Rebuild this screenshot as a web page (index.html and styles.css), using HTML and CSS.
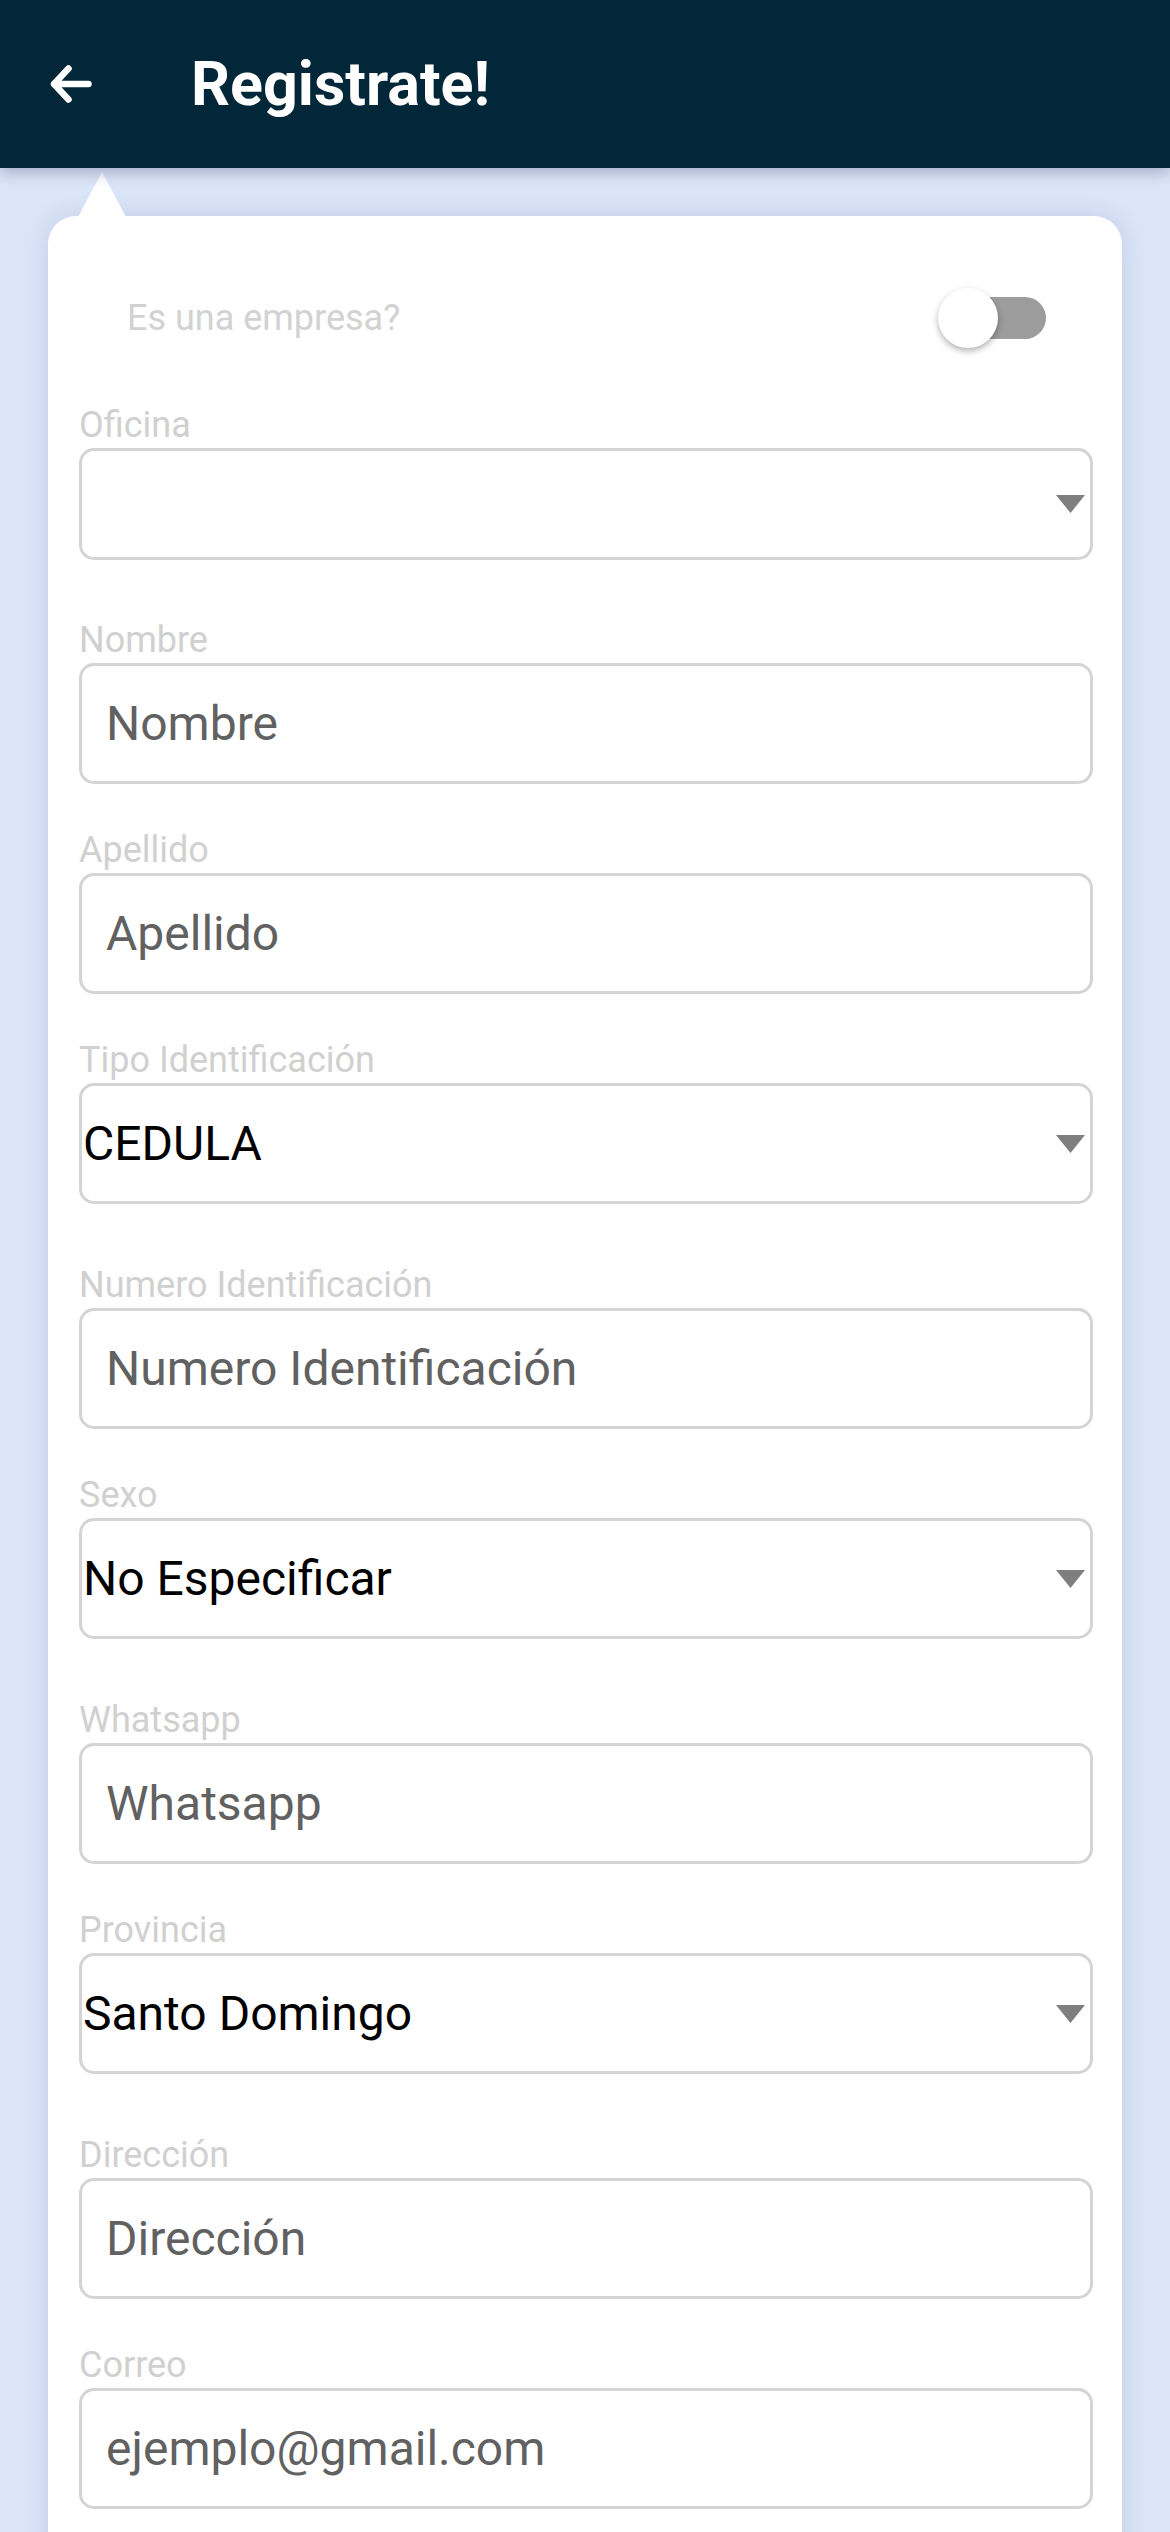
FILE: index.html
```html
<!DOCTYPE html>
<html lang="es">
<head>
<meta charset="utf-8">
<title>Registrate!</title>
<link rel="stylesheet" href="styles.css">
</head>
<body>
<header class="appbar">
  <svg class="back" width="50" height="50" viewBox="0 0 50 50" aria-hidden="true">
    <path d="M8 25H42.5M22.5 9.5L8 25L22.5 40.5" fill="none" stroke="#ffffff" stroke-width="6.5" stroke-linecap="round" stroke-linejoin="round"/>
  </svg>
  <h1 class="title">Registrate!</h1>
</header>

<main class="card">
  <div class="switch-row">
    <span class="switch-label">Es una empresa?</span>
    <div class="switch">
      <span class="track"></span>
      <span class="thumb"></span>
    </div>
  </div>

  <div class="field select first">
    <div class="label">Oficina</div>
    <div class="box dropdown empty">
      <span class="value"></span>
      <svg class="caret" width="29" height="18" viewBox="0 0 29 18" aria-hidden="true"><polygon points="0,0 29,0 14.5,18" fill="#7f7f7f"/></svg>
    </div>
  </div>

  <div class="field text">
    <div class="label">Nombre</div>
    <div class="box input"><span class="placeholder">Nombre</span></div>
  </div>

  <div class="field text">
    <div class="label">Apellido</div>
    <div class="box input"><span class="placeholder">Apellido</span></div>
  </div>

  <div class="field select">
    <div class="label">Tipo Identificación</div>
    <div class="box dropdown">
      <span class="value">CEDULA</span>
      <svg class="caret" width="29" height="18" viewBox="0 0 29 18" aria-hidden="true"><polygon points="0,0 29,0 14.5,18" fill="#7f7f7f"/></svg>
    </div>
  </div>

  <div class="field text">
    <div class="label">Numero Identificación</div>
    <div class="box input"><span class="placeholder">Numero Identificación</span></div>
  </div>

  <div class="field select">
    <div class="label">Sexo</div>
    <div class="box dropdown">
      <span class="value">No Especificar</span>
      <svg class="caret" width="29" height="18" viewBox="0 0 29 18" aria-hidden="true"><polygon points="0,0 29,0 14.5,18" fill="#7f7f7f"/></svg>
    </div>
  </div>

  <div class="field text">
    <div class="label">Whatsapp</div>
    <div class="box input"><span class="placeholder">Whatsapp</span></div>
  </div>

  <div class="field select">
    <div class="label">Provincia</div>
    <div class="box dropdown">
      <span class="value">Santo Domingo</span>
      <svg class="caret" width="29" height="18" viewBox="0 0 29 18" aria-hidden="true"><polygon points="0,0 29,0 14.5,18" fill="#7f7f7f"/></svg>
    </div>
  </div>

  <div class="field text">
    <div class="label">Dirección</div>
    <div class="box input"><span class="placeholder">Dirección</span></div>
  </div>

  <div class="field text">
    <div class="label">Correo</div>
    <div class="box input"><span class="placeholder">ejemplo@gmail.com</span></div>
  </div>
</main>
</body>
</html>
```

FILE: styles.css
```css
* {
  box-sizing: border-box;
}

html, body {
  margin: 0;
  padding: 0;
}

body {
  background: #dce6f9;
  font-family: Roboto, "Noto Sans", "Liberation Sans", sans-serif;
  min-height: 2700px;
}

.appbar {
  position: relative;
  z-index: 2;
  display: flex;
  align-items: center;
  height: 168px;
  padding-left: 46px;
  background: #022739;
  box-shadow: 0 5px 14px rgba(20, 35, 80, 0.28);
}

.back {
  display: block;
  flex: none;
}

.title {
  margin: 0 0 0 95px;
  font-size: 61px;
  font-weight: 700;
  line-height: 1;
  color: #ffffff;
}

.card {
  position: relative;
  display: flex;
  flex-direction: column;
  margin: 48px 48px 0;
  padding: 72px 29px 120px 31px;
  background: #ffffff;
  border-radius: 28px;
  box-shadow: 0 0 26px rgba(60, 85, 150, 0.18);
}

.card::before {
  content: "";
  position: absolute;
  left: 30px;
  top: -44px;
  width: 0;
  height: 0;
  border-left: 24px solid transparent;
  border-right: 24px solid transparent;
  border-bottom: 45px solid #ffffff;
}

.switch-row {
  display: flex;
  align-items: center;
  justify-content: space-between;
  height: 60px;
  padding: 0 47px 0 48px;
}

.switch-label {
  font-size: 36px;
  color: #d2d2d2;
}

.switch {
  position: relative;
  width: 108px;
  height: 60px;
}

.track {
  position: absolute;
  right: 0;
  top: 9px;
  width: 92px;
  height: 42px;
  border-radius: 21px;
  background: #9c9c9c;
}

.thumb {
  position: absolute;
  left: 0;
  top: 0;
  width: 60px;
  height: 60px;
  border-radius: 50%;
  background: #ffffff;
  box-shadow: 0 3px 6px rgba(0, 0, 0, 0.3);
}

.field {
  display: flex;
  flex-direction: column;
}

.field.first {
  margin-top: 54px;
}

.field.text {
  margin-bottom: 43px;
}

.field.select {
  margin-bottom: 58px;
}

.field.first {
  margin-bottom: 57px;
}

.label {
  font-size: 36px;
  line-height: 46px;
  height: 46px;
  color: #d0d0d0;
  white-space: nowrap;
}

.box {
  display: flex;
  align-items: center;
  height: 121px;
  border: 3px solid #d4d4d4;
  border-radius: 15px;
  font-size: 48px;
  white-space: nowrap;
}

.box.empty {
  height: 112px;
}

.input {
  padding-left: 24px;
}

.placeholder {
  color: #616161;
}

.dropdown {
  padding-left: 1px;
  padding-right: 5px;
}

.value {
  color: #000000;
}

.caret {
  display: block;
  flex: none;
  margin-left: auto;
}
```
